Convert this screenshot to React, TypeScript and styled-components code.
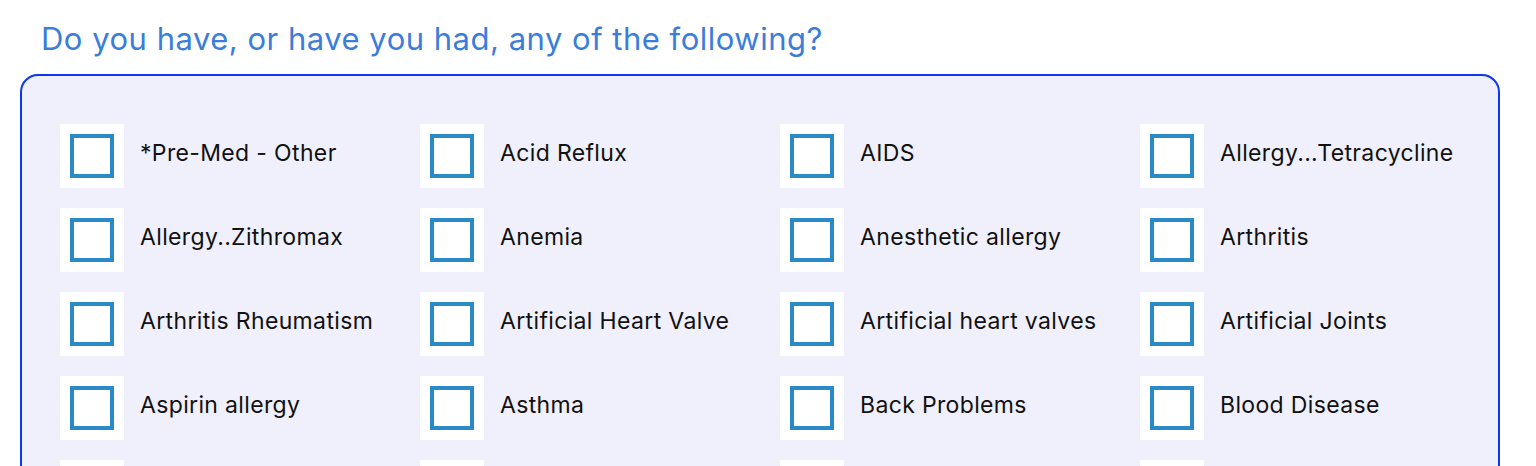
import React from "react";
import styled, { createGlobalStyle } from "styled-components";

const Global = createGlobalStyle`
  html, body { margin: 0; padding: 0; background: #ffffff; }
  body { font-family: Inter, "Noto Sans", sans-serif; }
`;

const Page = styled.div`
  padding: 18px 36px 40px 20px;
`;

const Title = styled.h2`
  margin: 0 0 14px 21px;
  font-size: 31px;
  line-height: 42px;
  letter-spacing: 0.5px;
  font-weight: 400;
  color: #3a7ddb;
`;

const Panel = styled.div`
  border: 2px solid #0a38f2;
  border-radius: 18px;
  background: #f0effc;
  padding: 48px 38px 40px;
`;

const Grid = styled.div`
  display: grid;
  grid-template-columns: repeat(4, 360px);
  row-gap: 20px;
`;

const Item = styled.label`
  display: flex;
  align-items: center;
  gap: 16px;
  height: 64px;
  cursor: pointer;
`;

const BoxWrap = styled.span`
  width: 64px;
  height: 64px;
  background: #ffffff;
  display: flex;
  align-items: center;
  justify-content: center;
  flex: none;
`;

const Box = styled.span`
  width: 44px;
  height: 44px;
  box-sizing: border-box;
  border: 4px solid #2a8ac8;
  background: #ffffff;
`;

const Label = styled.span`
  font-size: 23px;
  letter-spacing: 0.35px;
  color: #111111;
  white-space: nowrap;
  margin-bottom: 6px;
`;

const items = [
  "*Pre-Med - Other",
  "Acid Reflux",
  "AIDS",
  "Allergy...Tetracycline",
  "Allergy..Zithromax",
  "Anemia",
  "Anesthetic allergy",
  "Arthritis",
  "Arthritis Rheumatism",
  "Artificial Heart Valve",
  "Artificial heart valves",
  "Artificial Joints",
  "Aspirin allergy",
  "Asthma",
  "Back Problems",
  "Blood Disease",
  "Blood Transfusion",
  "Bronchitis",
  "Cancer",
  "Chemotherapy",
];

export default function App() {
  return (
    <>
      <Global />
      <Page>
        <Title>Do you have, or have you had, any of the following?</Title>
        <Panel>
          <Grid>
            {items.map((t) => (
              <Item key={t}>
                <BoxWrap>
                  <Box />
                </BoxWrap>
                <Label>{t}</Label>
              </Item>
            ))}
          </Grid>
        </Panel>
      </Page>
    </>
  );
}
